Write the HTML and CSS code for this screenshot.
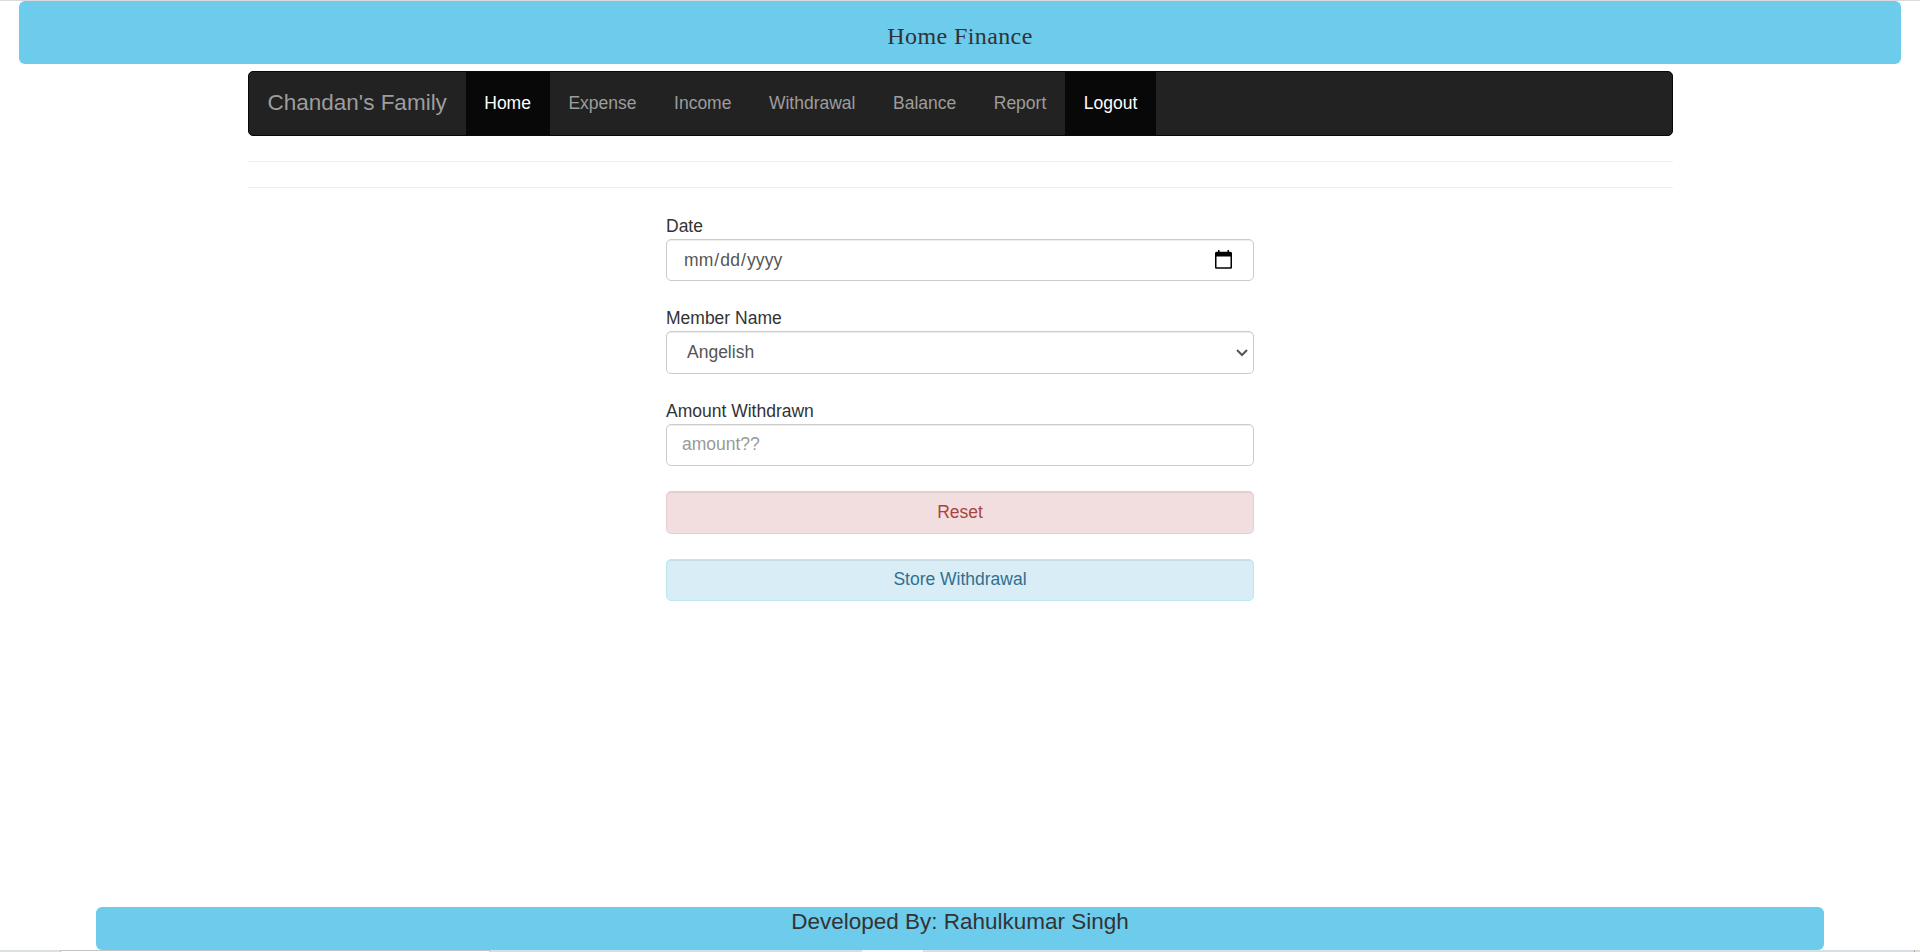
FILE: index.html
```html
<!DOCTYPE html>
<html lang="en">
<head>
<meta charset="utf-8">
<title>Home Finance</title>
<link rel="stylesheet" href="styles.css">
</head>
<body>
<header class="banner"><span class="banner-title">Home Finance</span></header>
<main class="container">
  <nav class="navbar">
    <a class="brand">Chandan's Family</a>
    <a class="nav-link active">Home</a>
    <a class="nav-link">Expense</a>
    <a class="nav-link">Income</a>
    <a class="nav-link">Withdrawal</a>
    <a class="nav-link">Balance</a>
    <a class="nav-link">Report</a>
    <a class="nav-link active">Logout</a>
  </nav>
  <hr class="rule">
  <hr class="rule">
  <form class="form">
    <label class="label" for="date">Date</label>
    <div class="field">
      <input class="control date" id="date" type="date">
      <svg class="calendar" viewBox="0 0 17 19"><path fill="#000" fill-rule="evenodd" d="M3 0h1.500v1.700h8V0H14v1.700h1.500Q17 1.700 17 3.200v14.300q0 1.300-1.300 1.300H1.300Q0 18.800 0 17.500V3.200q0-1.500 1.500-1.500H3zM1.500 6.400v10.900h14V6.400z"/></svg>
    </div>
    <label class="label" for="member">Member Name</label>
    <div class="field tall">
      <select class="control select" id="member"><option>Angelish</option></select>
      <svg class="chevron" viewBox="0 0 12 8"><path d="M1 1l5 5 5-5" fill="none" stroke="#555" stroke-width="2"/></svg>
    </div>
    <label class="label" for="amount">Amount Withdrawn</label>
    <div class="field"><input class="control amount" id="amount" type="text" placeholder="amount??"></div>
    <button class="control button danger" type="reset">Reset</button>
    <button class="control button info" type="button">Store Withdrawal</button>
  </form>
</main>
<footer class="footer">Developed By: Rahulkumar Singh</footer>
<div class="bottom-edge"><i class="edge-start"></i><i class="edge-tab"></i><i class="edge-mid"></i><i class="edge-light"></i><i class="edge-rest"></i><i class="edge-mark"></i><i class="edge-end"></i></div>
</body>
</html>
```
FILE: styles.css
```css
* { box-sizing: border-box; }
body {
  margin: 0;
  height: 952px;
  display: flex;
  flex-direction: column;
  align-items: center;
  overflow: hidden;
  border-top: 1px solid #dadadf;
  background: #fff;
  color: #333;
  font: 17.5px/25px "Liberation Sans", Arial, sans-serif;
}
.banner {
  width: 1882px;
  height: 63px;
  flex: none;
  border-radius: 6px;
  background: #6dcbec;
  text-align: center;
  padding-top: 20px;
}
.banner-title {
  display: block;
  font: 24px/30px "Liberation Serif", serif;
  letter-spacing: 0.4px;
}
.container { width: 1425px; margin-top: 7px; flex: 1; }
.navbar {
  display: flex;
  height: 65px;
  border: 1px solid #080808;
  border-radius: 5px;
  background: #222;
  color: #9d9d9d;
}
.brand { width: 217px; padding: 18px 0 0 19px; font-size: 22.5px; white-space: nowrap; }
.nav-link { padding: 19px 18.75px 0; }
.active { background: #080808; color: #fff; }
.rule { margin: 25px 0 0; border: 0; border-top: 1px solid #eee; }
.form { width: 588px; margin: 26px auto 0; display: flex; flex-direction: column; }
.label { height: 25px; }
.field { position: relative; height: 42px; margin-bottom: 25px; }
.tall { height: 43px; }
.control {
  display: block;
  width: 100%;
  height: 100%;
  margin: 0;
  padding: 7px 15px;
  border: 1px solid #ccc;
  border-radius: 5px;
  background: #fff;
  box-shadow: inset 0 1px 1px rgba(0, 0, 0, .075);
  color: #555;
  font: inherit;
}
.control::placeholder { color: #999; opacity: 1; }
.date { padding-left: 16px; letter-spacing: 0.1px; }
.date::-webkit-calendar-picker-indicator { opacity: 0; }
.select { appearance: none; padding: 7px 20px; }
.amount { padding: 6px 15px 8px; }
.calendar { position: absolute; right: 22px; top: 11px; width: 17px; height: 19px; }
.chevron { position: absolute; right: 6px; top: 18px; width: 12px; height: 8px; }
.button { margin-bottom: 25px; text-align: center; padding: 0; }
.danger { height: 43px; background: #f2dede; border-color: #ebccd1; color: #a94442; }
.info { height: 42px; padding-bottom: 2px; background: #d9edf7; border-color: #bce8f1; color: #31708f; }
.footer {
  width: 1728px;
  height: 43px;
  flex: none;
  padding-top: 2px;
  border-radius: 6px;
  background: #6dcbec;
  text-align: center;
  font-size: 22.5px;
}
.bottom-edge { display: flex; width: 100%; height: 2px; flex: none; }
.edge-start { width: 60px; background: #dedfdf; }
.edge-tab { width: 430px; border: 1px solid #c4c4c4; border-bottom: 0; }
.edge-mid { width: 372px; background: #d2dfe5; }
.edge-light { width: 61px; background: #f4f7f8; }
.edge-rest { flex: 1; background: #d8dfe3; }
.edge-mark { width: 1px; background: #aaa; }
.edge-end { width: 5px; background: #dedede; }
```
